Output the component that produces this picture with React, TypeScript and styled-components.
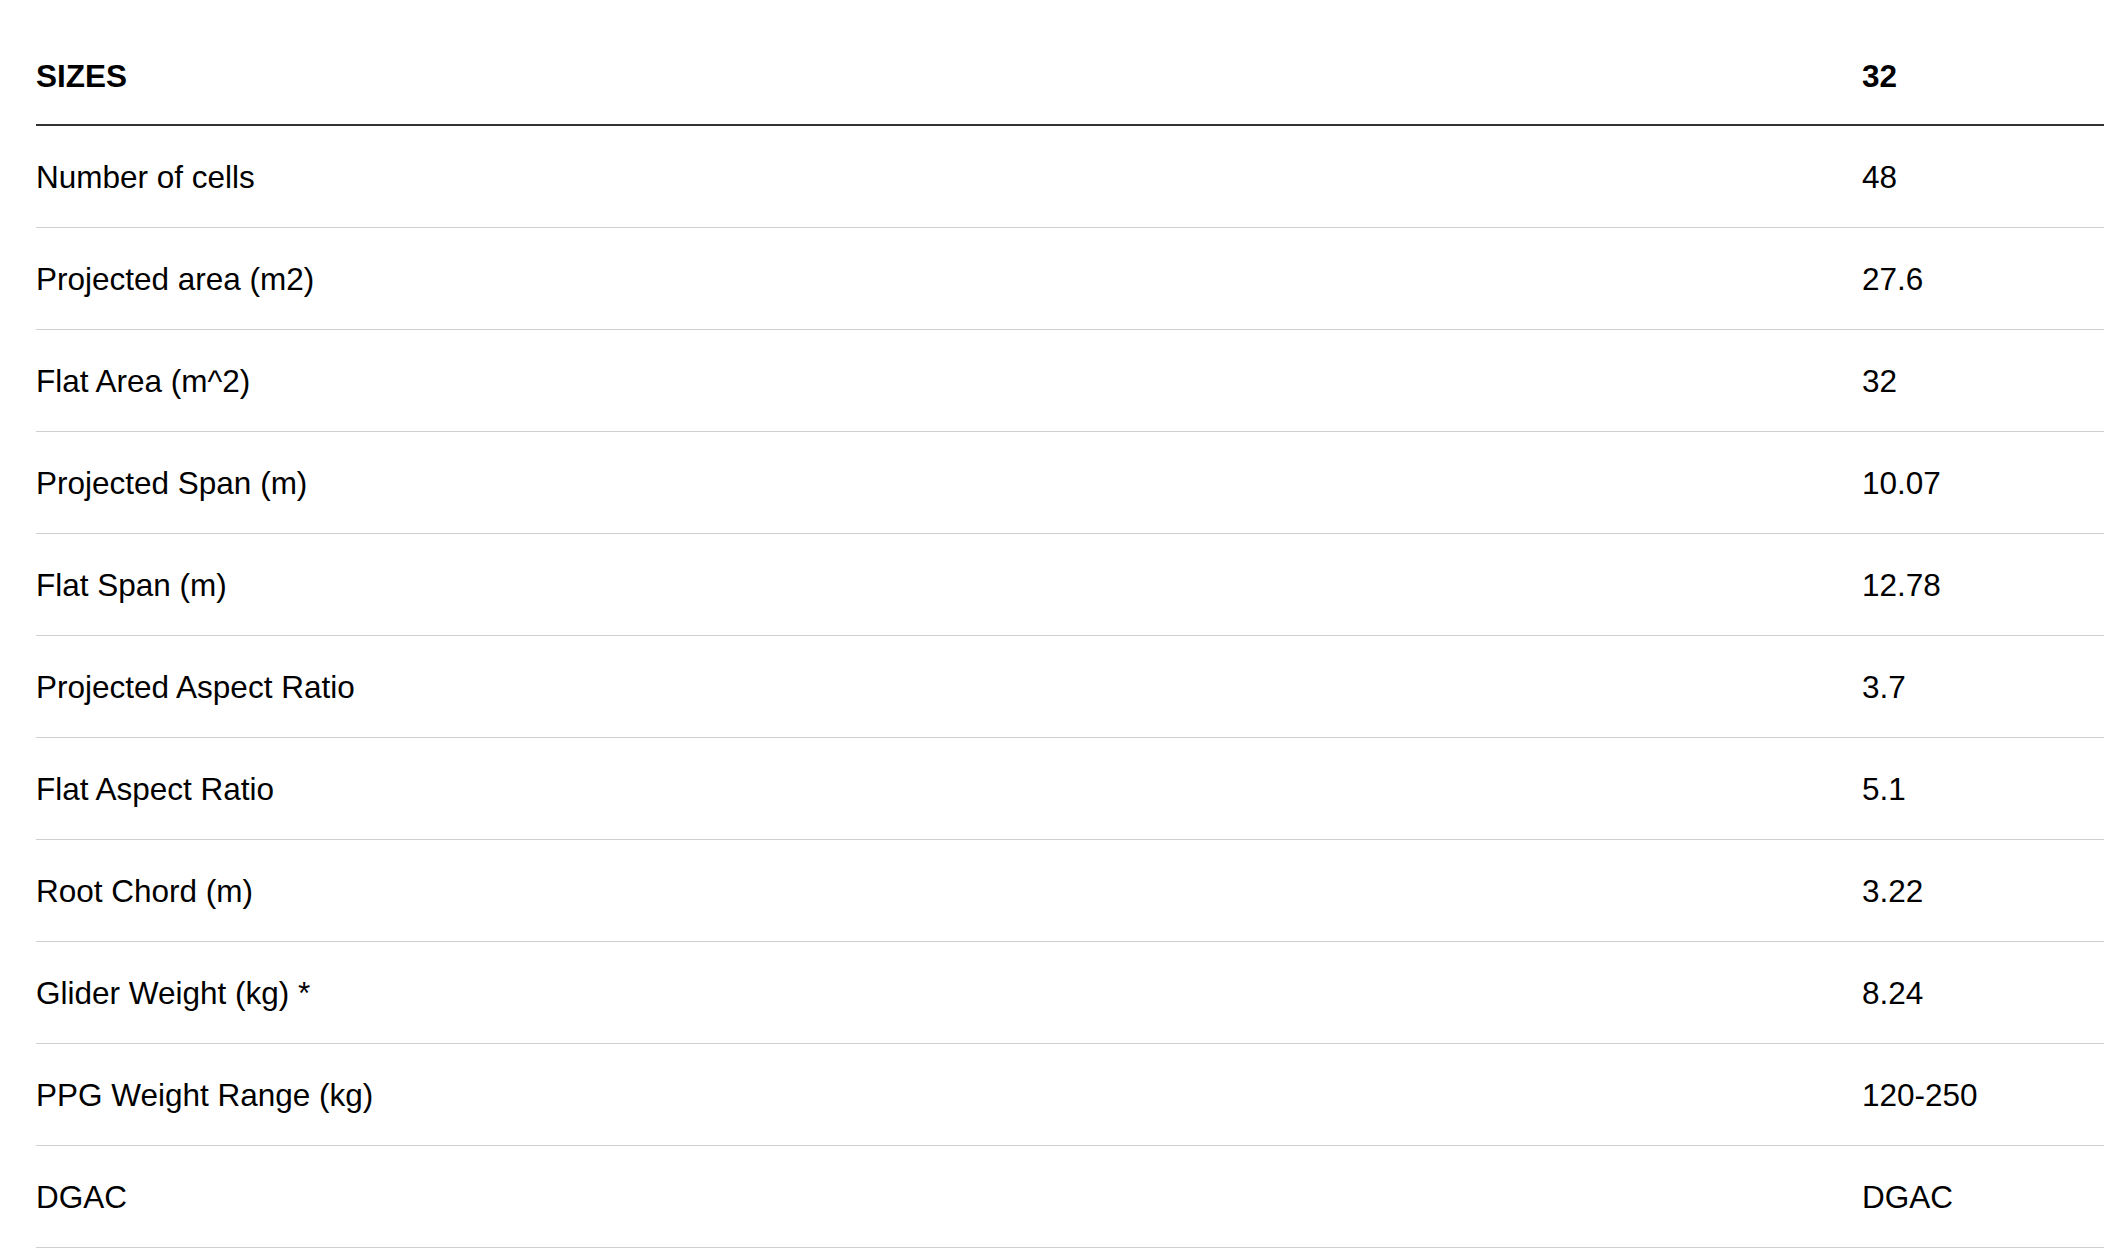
import styled, { createGlobalStyle } from 'styled-components';

const GlobalStyle = createGlobalStyle`
  html, body {
    margin: 0;
    padding: 0;
    background: #fff;
    overflow: hidden;
  }
  body {
    font-family: "Liberation Sans", Arial, Helvetica, sans-serif;
    color: #000;
  }
`;

const Wrap = styled.section`
  padding: 26px 0 0 36px;
`;

const Table = styled.div`
  display: flex;
  flex-direction: column;
  width: 100%;
`;

const Row = styled.div<{ $head?: boolean }>`
  display: grid;
  grid-template-columns: 1826px 1fr;
  align-items: center;
  box-sizing: border-box;
  height: ${p => (p.$head ? '100px' : '102px')};
  padding-top: 2px;
  border-bottom: ${p => (p.$head ? '2px solid #333' : '1px solid #cfcfcf')};
  font-size: 31.5px;
  font-weight: ${p => (p.$head ? 700 : 400)};
`;

const Cell = styled.div`
  white-space: nowrap;
`;

const specs: [string, string][] = [
  ['Number of cells', '48'],
  ['Projected area (m2)', '27.6'],
  ['Flat Area (m^2)', '32'],
  ['Projected Span (m)', '10.07'],
  ['Flat Span (m)', '12.78'],
  ['Projected Aspect Ratio', '3.7'],
  ['Flat Aspect Ratio', '5.1'],
  ['Root Chord (m)', '3.22'],
  ['Glider Weight (kg) *', '8.24'],
  ['PPG Weight Range (kg)', '120-250'],
  ['DGAC', 'DGAC'],
];

export default function App() {
  return (
    <>
      <GlobalStyle />
      <Wrap>
        <Table>
          <Row $head>
            <Cell>SIZES</Cell>
            <Cell>32</Cell>
          </Row>
          {specs.map(([label, value]) => (
            <Row key={label}>
              <Cell>{label}</Cell>
              <Cell>{value}</Cell>
            </Row>
          ))}
        </Table>
      </Wrap>
    </>
  );
}
